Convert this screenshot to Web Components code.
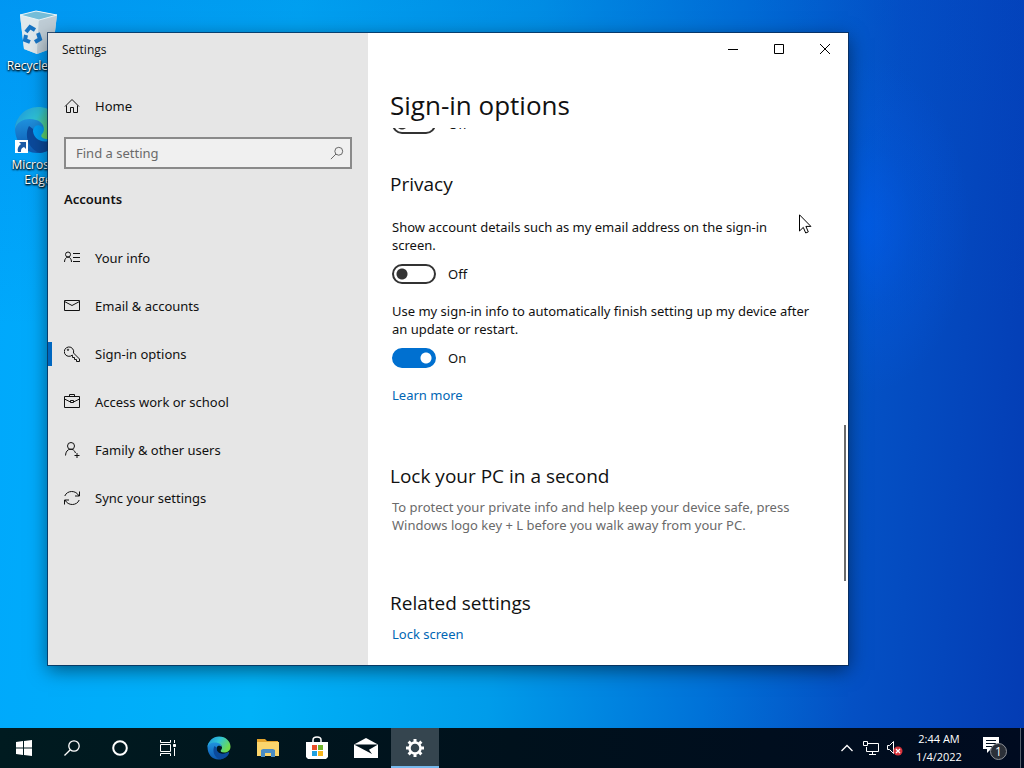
<!DOCTYPE html>
<html lang="en">
<head>
<meta charset="utf-8">
<title>Settings</title>
<style>
	html, body {
		height: 100%;
		margin: 0;
	}

	body {
		--ui: "Open Sans", "Noto Sans", sans-serif;
		font: 13px/18px "Noto Sans", "Open Sans", sans-serif;
		color: #111;
		overflow: hidden;
	}
</style>
</head>
<body>
<win-desktop>
	<desktop-icon slot="icons" icon="recycle" label="Recycle Bin"></desktop-icon>
	<desktop-icon slot="icons" icon="edge" label="Microsoft Edge" shortcut></desktop-icon>

	<settings-window slot="window" heading="Settings">
		<settings-nav slot="nav"></settings-nav>
		<settings-page slot="page" heading="Sign-in options">
			<toggle-switch class="first"></toggle-switch>
			<settings-section heading="Privacy">
				<toggle-switch label="Show account details such as my email address on the sign-in screen."></toggle-switch>
				<toggle-switch label="Use my sign-in info to automatically finish setting up my device after an update or restart." checked></toggle-switch>
				<text-link>Learn more</text-link>
			</settings-section>
			<settings-section heading="Lock your PC in a second">
				<hint-text>To protect your private info and help keep your device safe, press Windows logo key + L before you walk away from your PC.</hint-text>
			</settings-section>
			<settings-section heading="Related settings">
				<text-link>Lock screen</text-link>
			</settings-section>
		</settings-page>
	</settings-window>

	<mouse-pointer slot="pointer"></mouse-pointer>
	<task-bar slot="taskbar"></task-bar>
</win-desktop>

<script>
const ICONS = {
	home: '<path d="M1 8.5 8 1.5l7 7M2.5 7.5v7h4v-5h3v5h4v-7" />',
	info: '<circle cx="4" cy="4.500" r="2.500"/><path d="M.5 12C.5 5.500 7.500 5.500 7.500 12M9 3.500h7M9 7.500h7M9 11.500h7"/>',
	mail: '<path d="M.5 2.500h15v10H.5zM.5 3.500 8 7.500l7.500-4"/>',
	key: '<path d="M8.300 9A4.700 4.700 0 1 1 9.500 7l6 6v2.500h-3v-2h-2v-2H8.500z"/><circle cx="4" cy="3.800" r=".7"/>',
	work: '<path d="M.5 2.500h15v11H.5zM5.500 2.500v-2h5v2M.5 5l6 3M9.500 8l6-3M6.500 6.500h3v2h-3z"/>',
	family: '<circle cx="7" cy="4" r="3.500"/><path d="M1.500 13.500c.3-8 8.500-8 10-2.500M10.500 13.500h5M13 11v5"/>',
	sync: '<path d="M.8 6C3 .2 12-.2 15 6M15.500 1.500V6H11M15.200 10C13 15.800 4 16.200 1 10M.5 14.500V10H5"/>',
	search: '<circle cx="10" cy="6" r="4.500"/><path d="M6.800 9.200 1 15"/>'
};

const icon = (name) => `<svg class="icon" width="16" height="16" viewBox="0 0 16 16" fill="none" stroke="currentColor" aria-hidden="true">${ICONS[name]}</svg>`;

// one gradient set per shadow root, so the ids never clash
const EDGE = `
	<defs>
		<linearGradient id="top" x1="0" y1="0" x2="1" y2=".5">
			<stop offset="0" stop-color="#1d8ed8"/>
			<stop offset=".5" stop-color="#2fc4d8"/>
			<stop offset="1" stop-color="#6fdc4c"/>
		</linearGradient>
		<linearGradient id="low" x1="0" y1="0" x2="0" y2="1">
			<stop offset="0" stop-color="#2299e4"/>
			<stop offset="1" stop-color="#0d58b0"/>
		</linearGradient>
	</defs>
	<path fill="url(#low)" d="M1 22C1 10 12 8 19 9c9 1 11 8 10 13-2-3-7-4-9 0-4 8 4 16 14 14 5-1 8-4 10-3-4 8-12 14-21 14C10 47 1 36 1 22z"/>
	<path fill="#0b4a9c" d="M15 20c-5 9-1 23 11 27 9-1 15-6 18-12 1-2-1-3-3-2-12 6-23 0-22-10z"/>
	<path fill="url(#top)" d="M1 23C2 10 12 1 24 1c14 0 23 10 23 20 0 8-6 12-13 12-6 0-8-3-6-5 4-4 2-12-6-14C12 11 3 15 1 23z"/>
`;

const define = (name, markup) => customElements.define(name, class extends HTMLElement {
	constructor() {
		super();
		this.attachShadow({ mode: 'open' });
	}

	connectedCallback() {
		this.shadowRoot.innerHTML = typeof markup === 'function' ? markup(this) : markup;
	}
});

define('win-desktop', `
	<style>
		:host {
			display: flex;
			flex-direction: column;
			height: 100vh;
		}

		.area {
			position: relative;
			flex: 1;
			min-height: 0;
			background:
				radial-gradient(ellipse 110px 170px at 84% 31%, rgba(0, 96, 245, .6), rgba(0, 96, 245, .2) 50%, rgba(0, 96, 245, 0)),
				linear-gradient(to bottom, rgba(0, 70, 200, .18), rgba(0, 70, 200, 0) 45%),
				linear-gradient(94deg, #00a8fc 0%, #00b2f8 28%, #009cea 50%, #0072d8 70%, #0450c4 84%, #043cb4 100%);
		}

		.icons {
			display: flex;
			flex-direction: column;
			gap: 33px;
			width: 76px;
			padding-top: 7px;
		}
	</style>
	<div class="area">
		<div class="icons"><slot name="icons"></slot></div>
		<slot name="window"></slot>
		<slot name="pointer"></slot>
	</div>
	<slot name="taskbar"></slot>
`);

const RECYCLE = `
	<path fill="#b9d9ea" d="M6 8 23 4l20 4-4 33-16 6-13-5z"/>
	<path fill="#dfe8ec" d="m6 8 19 4-2 35-13-5z"/>
	<path fill="#bfcdd6" d="m25 12 18-4-4 33-16 6z"/>
	<path fill="#75bdd8" stroke="#e9f4f8" d="M6 8 22 4l21 4-18 5z"/>
	<path fill="none" stroke="#1775c4" stroke-width="4" d="m12 25 4-5 5 3M24 26l2 6-5 3M16 35l-5-2 1-5"/>
`;

define('desktop-icon', (el) => `
	<style>
		:host {
			display: block;
		}

		figure {
			position: relative;
			display: flex;
			flex-direction: column;
			align-items: center;
			gap: 3px;
			margin: 0;
			color: #fff;
			font-family: var(--ui);
			font-size: 12px;
			line-height: 15px;
			text-align: center;
			text-shadow: 0 1px 2px #000, 1px 1px 2px #000;
		}

		.arrow {
			position: absolute;
			left: 15px;
			top: 34px;
		}
	</style>
	<figure>
		<svg width="48" height="48" viewBox="0 0 48 48" aria-hidden="true">${el.getAttribute('icon') === 'edge' ? EDGE : RECYCLE}</svg>
		${el.hasAttribute('shortcut') ? '<svg class="arrow" width="13" height="13" viewBox="0 0 13 13"><path fill="#fff" d="M0 0h13v13H0z"/><path fill="#1c5aa6" d="M4 2h7v7L9 7c-3 1-3 3-3 5H3c-1-3 0-6 3-8z"/></svg>' : ''}
		<figcaption>${el.getAttribute('label')}</figcaption>
	</figure>
`);

define('settings-window', (el) => `
	<style>
		:host {
			position: absolute;
			inset: 33px 176px 63px 48px;
			display: flex;
			background: #fff;
			outline: 1px solid rgba(10, 40, 80, .75);
			box-shadow: 0 5px 18px rgba(0, 0, 0, .5);
		}

		aside {
			flex: 0 0 40%;
			background: #e6e6e6;
		}

		main {
			display: flex;
			flex: 1;
			flex-direction: column;
			min-width: 0;
		}

		.caption {
			padding-left: 14px;
			font-family: var(--ui);
			font-size: 12px;
			line-height: 34px;
		}

		.buttons {
			display: flex;
			flex: none;
			justify-content: flex-end;
		}

		button {
			display: grid;
			place-items: center;
			width: 46px;
			height: 32px;
			padding: 0;
			border: 0;
			background: none;
			color: #000;
		}
	</style>
	<aside>
		<div class="caption">${el.getAttribute('heading')}</div>
		<slot name="nav"></slot>
	</aside>
	<main>
		<div class="buttons">
			<button aria-label="Minimize"><svg width="10" height="10" fill="none" stroke="currentColor"><path d="M0 5.500h10"/></svg></button>
			<button aria-label="Maximize"><svg width="10" height="10" fill="none" stroke="currentColor"><path d="M.5.5h9v9H.5z"/></svg></button>
			<button aria-label="Close"><svg width="10" height="10" fill="none" stroke="currentColor"><path d="m0 0 10 10m0-10L0 10"/></svg></button>
		</div>
		<slot name="page"></slot>
	</main>
`);

const NAV = [
	['info', 'Your info'],
	['mail', 'Email &amp; accounts'],
	['key', 'Sign-in options'],
	['work', 'Access work or school'],
	['family', 'Family &amp; other users'],
	['sync', 'Sync your settings']
];

define('settings-nav', `
	<style>
		:host {
			display: block;
			padding-top: 15px;
		}

		a {
			display: flex;
			align-items: center;
			gap: 15px;
			height: 48px;
			padding-left: 16px;
			color: inherit;
			text-decoration: none;
		}

		a.current {
			background: linear-gradient(#0067c0, #0067c0) 0 50% / 4px 24px no-repeat;
		}

		.search {
			display: flex;
			align-items: center;
			height: 28px;
			margin: 7px 16px 0;
			border: 2px solid #8a8a8a;
			background: #f0f0f0;
			color: #555;
		}

		input {
			flex: 1;
			min-width: 0;
			padding: 0 10px;
			border: 0;
			outline: 0;
			background: none;
			font: inherit;
		}

		input::placeholder {
			color: #6a6a6a;
			opacity: 1;
		}

		.search button {
			display: grid;
			padding: 0 6px;
			border: 0;
			background: none;
			color: inherit;
		}

		.search svg {
			width: 14px;
			height: 14px;
		}

		h2 {
			margin: 20px 16px 25px;
			font-size: 13px;
			font-weight: 600;
			line-height: 20px;
		}
	</style>
	<a href="#home">${icon('home')}Home</a>
	<div class="search">
		<input type="text" placeholder="Find a setting" aria-label="Find a setting">
		<button aria-label="Search">${icon('search')}</button>
	</div>
	<h2>Accounts</h2>
	<nav>
		${NAV.map(([name, label]) => `<a href="#${name}"${name === 'key' ? ' class="current" aria-current="page"' : ''}>${icon(name)}${label}</a>`).join('')}
	</nav>
`);

define('settings-page', (el) => `
	<style>
		:host {
			position: relative;
			display: flex;
			flex: 1;
			flex-direction: column;
			min-height: 0;
		}

		h1 {
			margin: 0;
			padding: 22px 22px 5px;
			font-family: var(--ui);
			font-size: 26px;
			font-weight: 400;
			line-height: 36px;
		}

		.scroll {
			flex: 1;
			min-height: 0;
			padding: 0 37px 0 24px;
			overflow: hidden;
		}

		/* scrolled so that only the lower edge of the first switch shows */
		::slotted(.first) {
			margin-top: -14px;
		}

		.thumb {
			position: absolute;
			right: 2px;
			top: 60%;
			width: 2px;
			height: 26%;
			background: #6b6b6b;
		}
	</style>
	<h1>${el.getAttribute('heading')}</h1>
	<div class="scroll"><slot></slot></div>
	<div class="thumb"></div>
`);

define('settings-section', (el) => `
	<style>
		:host {
			display: block;
			margin-bottom: 55px;
		}

		h2 {
			margin: 0 0 8px -2px;
			font-family: var(--ui);
			font-size: 19px;
			font-weight: 400;
			line-height: 28px;
		}

		::slotted(toggle-switch:first-child) {
			margin-top: 20px;
		}
	</style>
	<h2>${el.getAttribute('heading')}</h2>
	<slot></slot>
`);

define('toggle-switch', (el) => `
	<style>
		:host {
			display: block;
			margin-bottom: 18px;
		}

		:host(.first) {
			margin-bottom: 36px;
		}

		label {
			display: block;
			margin-bottom: 10px;
		}

		.row {
			display: flex;
			align-items: center;
			gap: 12px;
			height: 20px;
		}

		input {
			appearance: none;
			width: 44px;
			height: 20px;
			margin: 0;
			border: 2px solid #333;
			border-radius: 10px;
			background: radial-gradient(circle at 8px 8px, #333 5px, transparent 6px);
		}

		input:checked {
			border-color: #0070d0;
			background: radial-gradient(circle at 32px 8px, #fff 5px, #0070d0 6px);
		}
	</style>
	${el.hasAttribute('label') ? `<label for="switch">${el.getAttribute('label')}</label>` : ''}
	<div class="row">
		<input id="switch" type="checkbox" role="switch"${el.hasAttribute('label') ? '' : ' aria-labelledby="state"'}${el.hasAttribute('checked') ? ' checked' : ''}>
		<span id="state">${el.hasAttribute('checked') ? 'On' : 'Off'}</span>
	</div>
`);

define('text-link', `
	<style>
		:host {
			display: block;
			margin-bottom: 58px;
		}

		a {
			color: #0066b4;
			text-decoration: none;
		}
	</style>
	<a href="#"><slot></slot></a>
`);

define('hint-text', `
	<style>
		:host {
			display: block;
			color: #6a6a6a;
		}
	</style>
	<slot></slot>
`);

define('mouse-pointer', `
	<style>
		:host {
			position: absolute;
			left: 799px;
			top: 214px;
		}
	</style>
	<svg width="13" height="20" viewBox="0 0 13 20"><path fill="#fff" stroke="#000" d="M.5.8v16.200l3.800-3.600 2.400 5.600 2.600-1.100-2.400-5.500h5z"/></svg>
`);

define('task-bar', `
	<style>
		:host {
			display: flex;
			justify-content: space-between;
			height: 40px;
			background: linear-gradient(to right, #001b20, #00111c 50%, #000b20);
			color: #fff;
			font-family: var(--ui);
			font-size: 11px;
		}

		div {
			display: flex;
		}

		button {
			display: grid;
			place-items: center;
			padding: 0;
			border: 0;
			background: none;
			color: inherit;
			font: inherit;
		}

		.apps {
			gap: 1px;
			margin-left: 3px;
		}

		.left button {
			width: 48px;
		}

		.active {
			background: #35454f;
			box-shadow: inset 0 -2px #76b9ed;
		}

		.tray button {
			width: 24px;
		}

		.tray .clock {
			width: 64px;
			line-height: 18px;
		}

		.tray .notes {
			width: 48px;
		}

		.tray .show {
			width: 5px;
			background: linear-gradient(#56606c, #56606c) 1px 0 / 1px 100% no-repeat;
		}
	</style>
	<div class="left">
		<button aria-label="Start"><svg width="16" height="16" fill="#fff"><path d="m0 2 7-1v6.500H0zM8 .9 16 0v7.500H8zM0 8.500h7V15l-7-1zM8 8.500h8V16l-8-1z"/></svg></button>
		<button aria-label="Search"><svg width="16" height="16" fill="none" stroke="#fff" stroke-width="1.300"><circle cx="10" cy="6" r="5.200"/><path d="M6.300 9.700.5 15.500"/></svg></button>
		<button aria-label="Cortana"><svg width="16" height="16" fill="none" stroke="#fff" stroke-width="2"><circle cx="8" cy="8" r="6.800"/></svg></button>
		<button aria-label="Task view"><svg width="16" height="16" fill="none" stroke="#fff"><path d="M.5 0v2.500h10V0M.5 16v-2.500h10V16M.5 4.500h10v7H.5zM14.500 0v3M14.500 8v8"/><path fill="#fff" d="M13.500 4.500h2v2h-2z"/></svg></button>
		<div class="apps">
			<button aria-label="Microsoft Edge"><svg width="24" height="24" viewBox="0 0 48 48">${EDGE}</svg></button>
			<button aria-label="File Explorer"><svg width="22" height="20"><path fill="#e4a42c" d="M0 1h8l2 2h11v5H0z"/><path fill="#fbd56c" d="M0 4h22v14H0z"/><path fill="#4a8cc4" d="M4 19v-7l2-1h10l2 1v7h-4v-4H8v4z"/></svg></button>
			<button aria-label="Microsoft Store"><svg width="24" height="24"><path fill="none" stroke="#fff" stroke-width="1.500" d="M8 7V4c0-4 8-4 8 0v3"/><path fill="#fff" d="M1 6h22v15l-2 2H3l-2-2z"/><path fill="#e8502a" d="M7 9h5v5H7z"/><path fill="#6fb52c" d="M13 9h5v5h-5z"/><path fill="#1fa0e0" d="M7 15h5v5H7z"/><path fill="#f8b61c" d="M13 15h5v5h-5z"/></svg></button>
			<button aria-label="Mail"><svg width="24" height="20"><path fill="#fff" d="M0 6.500 12 0l12 6.500V20H0z"/><path fill="#00131c" d="M0 6.500h24l-9 5.200 3 4.300z"/></svg></button>
			<button class="active" aria-label="Settings"><svg width="20" height="20" viewBox="0 0 20 20" fill="none" stroke="#fff"><circle cx="10" cy="10" r="5.500" stroke-width="2.500"/><path stroke-width="3" d="M10 1v3M10 16v3M1 10h3M16 10h3M3.600 3.600l2.200 2.200M14.200 14.200l2.200 2.200M16.400 3.600l-2.200 2.200M5.800 14.200l-2.200 2.200"/></svg></button>
		</div>
	</div>
	<div class="tray">
		<button aria-label="Show hidden icons"><svg width="12" height="8" fill="none" stroke="#fff" stroke-width="1.300"><path d="m.5 7 5.500-5.500L11.500 7"/></svg></button>
		<button aria-label="Network"><svg width="16" height="15" fill="none" stroke="#fff"><path d="M5 2.500h10.500v8h-12V6M.5.500h4v4h-4zM9.500 10.500v3M6 13.500h7"/></svg></button>
		<button aria-label="Volume muted"><svg width="18" height="16"><path fill="none" stroke="#fff" d="M1.500 5.500h2l4-4v12l-4-4h-2z"/><circle cx="12" cy="11" r="4.500" fill="#d8343c"/><path stroke="#fff" stroke-width="1.300" d="m10 9 4 4m0-4-4 4"/></svg></button>
		<button class="clock"><span>2:44 AM<br>1/4/2022</span></button>
		<button class="notes" aria-label="1 new notification">
			<svg width="24" height="24"><path fill="#fff" d="M0 1h16v12H8l-4 4v-4H0z"/><path stroke="#001020" d="M3 4.500h10M3 7.500h10M3 10.500h7"/><circle cx="15.500" cy="15.500" r="8" fill="#2b3038" stroke="#8c9096"/><text x="15.500" y="20" fill="#fff" font-size="12" text-anchor="middle">1</text></svg>
		</button>
		<button class="show" aria-label="Show desktop"></button>
	</div>
`);
</script>
</body>
</html>
